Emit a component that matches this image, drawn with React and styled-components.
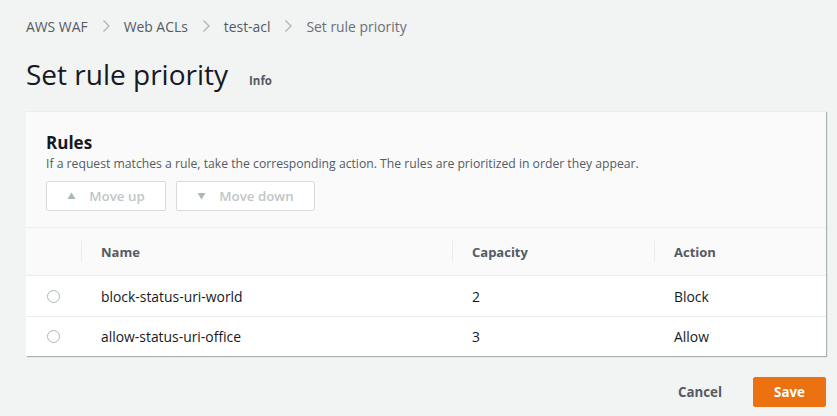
import React, { useState } from 'react';
import styled, { createGlobalStyle } from 'styled-components';

const GlobalStyle = createGlobalStyle`
  body {
    margin: 0;
    background: #f2f3f3;
    font-family: "Open Sans", "Noto Sans", Arial, sans-serif;
    color: #16191f;
  }
`;

const Page = styled.div`
  padding: 17px 11px 0 26px;
  width: 800px;
`;

const Crumbs = styled.nav`
  display: flex;
  align-items: center;
  font-size: 13.9px;
  color: #545b64;
  height: 18px;
`;

const Crumb = styled.span`
  color: ${p => (p.current ? '#687078' : '#545b64')};
`;

const Sep = styled.span`
  display: inline-flex;
  margin: 0 13px 0 14px;
  color: #aab7b8;
`;

const TitleRow = styled.div`
  display: flex;
  align-items: baseline;
  margin-top: 20px;
  height: 44px;
`;

const Title = styled.h1`
  margin: 0;
  font-size: 28px;
  font-weight: 400;
  color: #16191f;
`;

const Info = styled.span`
  font-size: 11.5px;
  font-weight: 700;
  color: #545b64;
  margin-left: 21px;
`;

const Container = styled.section`
  margin-top: 12px;
  background: #fff;
  border-top: 1px solid #eaeded;
  box-shadow: 1px 1px 1px 0 rgba(0, 28, 36, 0.3);
`;

const Header = styled.div`
  background: #fafafa;
  padding: 20px 20px 16px 20px;
  border-bottom: 1px solid #eaeded;
`;

const HeaderTitle = styled.h2`
  margin: 0;
  font-size: 17px;
  font-weight: 700;
  line-height: 22px;
`;

const Desc = styled.p`
  margin: 2px 0 0;
  font-size: 12.2px;
  color: #545b64;
  line-height: 16px;
`;

const Buttons = styled.div`
  display: flex;
  gap: 10px;
  margin-top: 9px;
`;

const GhostButton = styled.button`
  display: inline-flex;
  align-items: center;
  justify-content: center;
  gap: 13px;
  width: ${p => p.w}px;
  height: 30px;
  background: #fff;
  border: 1px solid #d5dbdb;
  border-radius: 2px;
  font-family: inherit;
  font-size: 13.3px;
  font-weight: 600;
  color: #c0c6c7;
  padding: 0;
`;

const Table = styled.div`
  display: grid;
  grid-template-columns: 55px 371px 202px 1fr;
`;

const HeadCell = styled.div`
  background: #fafafa;
  height: 47px;
  display: flex;
  align-items: center;
  font-size: 13px;
  font-weight: 700;
  color: #545b64;
  border-bottom: 1px solid #eaeded;
  position: relative;
  padding-left: ${p => (p.first ? 0 : 20)}px;
  &::before {
    content: '';
    display: ${p => (p.first ? 'none' : 'block')};
    position: absolute;
    left: 0;
    top: 13px;
    height: 21px;
    border-left: 1px solid #eaeded;
  }
`;

const Cell = styled.div`
  height: ${p => (p.last ? 39 : 40)}px;
  display: flex;
  align-items: center;
  font-size: 13.9px;
  color: #16191f;
  padding-left: 20px;
  border-bottom: ${p => (p.last ? 'none' : '1px solid #eaeded')};
`;

const Radio = styled.span`
  width: 13px;
  height: 13px;
  border-radius: 50%;
  border: 1px solid #aab7b8;
  box-sizing: border-box;
  margin-left: 1px;
`;

const Footer = styled.div`
  display: flex;
  justify-content: flex-end;
  align-items: center;
  gap: 21px;
  margin-top: 21px;
`;

const LinkButton = styled.button`
  background: none;
  border: none;
  font-family: inherit;
  font-size: 13.3px;
  font-weight: 700;
  color: #545b64;
  padding: 0 10px;
  height: 30px;
`;

const PrimaryButton = styled.button`
  background: #ec7211;
  border: 1px solid #ec7211;
  border-radius: 2px;
  color: #fff;
  font-family: inherit;
  font-size: 13.3px;
  font-weight: 700;
  width: 73px;
  height: 30px;
`;

const Chevron = () => (
  <svg width="9" height="14" viewBox="0 0 9 14">
    <path d="M1.5 1.5 L7 7 L1.5 12.5" fill="none" stroke="#aab7b8" strokeWidth="1.3" />
  </svg>
);

const Tri = ({ down }) => (
  <svg width="9" height="8" viewBox="0 0 9 8">
    <path d={down ? 'M0.5 1 H8.5 L4.5 7.5 Z' : 'M0.5 7 H8.5 L4.5 0.5 Z'} fill="#aab7b8" />
  </svg>
);

const rules = [
  { name: 'block-status-uri-world', capacity: 2, action: 'Block' },
  { name: 'allow-status-uri-office', capacity: 3, action: 'Allow' },
];

export default function App() {
  const [sel] = useState(null);
  const crumbs = ['AWS WAF', 'Web ACLs', 'test-acl', 'Set rule priority'];
  return (
    <Page>
      <GlobalStyle />
      <Crumbs>
        {crumbs.map((c, i) => (
          <React.Fragment key={c}>
            {i > 0 && (
              <Sep>
                <Chevron />
              </Sep>
            )}
            <Crumb current={i === crumbs.length - 1}>{c}</Crumb>
          </React.Fragment>
        ))}
      </Crumbs>
      <TitleRow>
        <Title>Set rule priority</Title>
        <Info>Info</Info>
      </TitleRow>
      <Container>
        <Header>
          <HeaderTitle>Rules</HeaderTitle>
          <Desc>
            If a request matches a rule, take the corresponding action. The rules are prioritized in order they appear.
          </Desc>
          <Buttons>
            <GhostButton w={120} disabled>
              <Tri /> Move up
            </GhostButton>
            <GhostButton w={139} disabled>
              <Tri down /> Move down
            </GhostButton>
          </Buttons>
        </Header>
        <Table>
          <HeadCell first />
          <HeadCell>Name</HeadCell>
          <HeadCell>Capacity</HeadCell>
          <HeadCell>Action</HeadCell>
          {rules.map((r, i) => {
            const last = i === rules.length - 1;
            return (
              <React.Fragment key={r.name}>
                <Cell last={last}>
                  <Radio data-checked={sel === i} />
                </Cell>
                <Cell last={last}>{r.name}</Cell>
                <Cell last={last}>{r.capacity}</Cell>
                <Cell last={last}>{r.action}</Cell>
              </React.Fragment>
            );
          })}
        </Table>
      </Container>
      <Footer>
        <LinkButton>Cancel</LinkButton>
        <PrimaryButton>Save</PrimaryButton>
      </Footer>
    </Page>
  );
}
